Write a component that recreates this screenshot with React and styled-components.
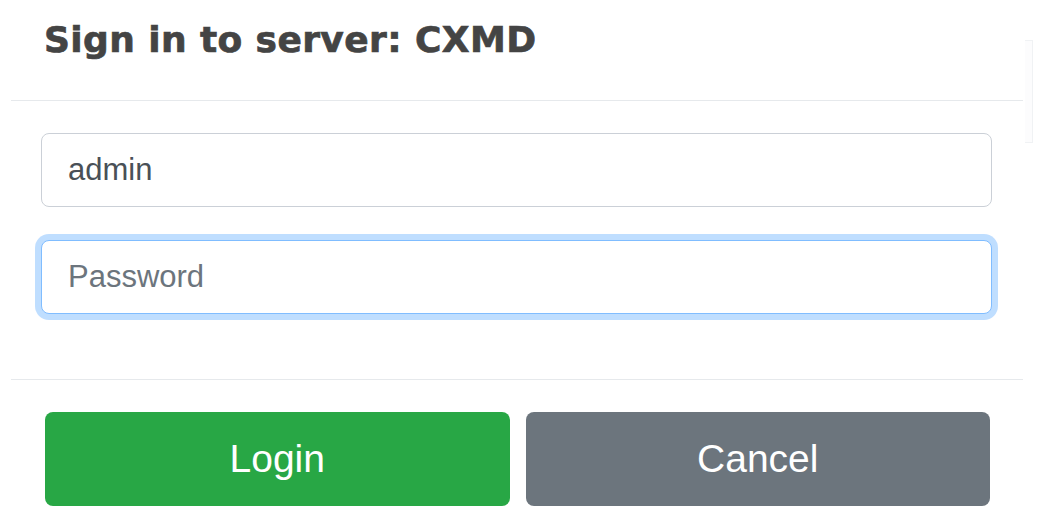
import React, { useState } from 'react';
import styled, { createGlobalStyle } from 'styled-components';

const GlobalStyle = createGlobalStyle`
    html, body {
        margin: 0;
        padding: 0;
        background: #fff;
    }
    body {
        font-family: "Liberation Sans", Arial, sans-serif;
    }
    * {
        box-sizing: border-box;
    }
`;

const Page = styled.div`
    display: flex;
    align-items: flex-start;
    width: 1041px;
    height: 529px;
    overflow: hidden;
    padding-left: 11px;
`;

const Dialog = styled.div`
    width: 1012px;
    flex-shrink: 0;
    background: #fff;
`;

const Backdrop = styled.div`
    margin-top: 40px;
    margin-left: 2px;
    width: 8px;
    height: 103px;
    background: #fcfcfd;
    border: 1px solid #f0f2f4;
    border-left: none;
`;

const Header = styled.div`
    padding: 18px 31px 39px 33px;
    border-bottom: 1px solid #e6e9ec;
`;

const Title = styled.h5`
    margin: 0;
    font-family: "DejaVu Sans", "Liberation Sans", sans-serif;
    font-weight: bold;
    font-size: 36px;
    line-height: 43px;
    letter-spacing: 0.4px;
    color: #444;
    -webkit-text-stroke: 0.7px #444;
`;

const Body = styled.div`
    padding: 32px 31px 65px 30px;
    display: flex;
    flex-direction: column;
    gap: 33px;
`;

const Field = styled.input`
    display: block;
    width: 100%;
    height: 74px;
    padding: 0 26px;
    font-family: "Liberation Sans", Arial, sans-serif;
    font-size: 31px;
    color: #495057;
    background: #fff;
    border: 1px solid ${({ focused }) => (focused ? '#80bdff' : '#cbd0d7')};
    border-radius: 8px;
    outline: none;
    box-shadow: ${({ focused }) => (focused ? '0 0 0 6px rgba(0, 123, 255, 0.25)' : 'none')};

    &::placeholder {
        color: #6c757d;
        opacity: 1;
    }
`;

const Footer = styled.div`
    border-top: 1px solid #e6e9ec;
    padding: 32px 33px 0 34px;
    display: flex;
    gap: 16px;
`;

const Button = styled.button`
    flex: 1;
    height: 94px;
    border: none;
    border-radius: 8px;
    background-color: ${({ variant }) => (variant === 'success' ? '#28a745' : '#6c757d')};
    color: #fff;
    font-family: "Liberation Sans", Arial, sans-serif;
    font-size: 39px;
    cursor: pointer;
`;

const App = () => {
    const [username, setUsername] = useState('admin');
    const [password, setPassword] = useState('');

    return (
        <>
            <GlobalStyle />
            <Page>
                <Dialog>
                    <Header>
                        <Title>Sign in to server: CXMD</Title>
                    </Header>
                    <Body>
                        <Field
                            type="text"
                            value={username}
                            onChange={(e) => setUsername(e.target.value)}
                        />
                        <Field
                            type="password"
                            placeholder="Password"
                            focused
                            value={password}
                            onChange={(e) => setPassword(e.target.value)}
                        />
                    </Body>
                    <Footer>
                        <Button variant="success">Login</Button>
                        <Button variant="secondary">Cancel</Button>
                    </Footer>
                </Dialog>
                <Backdrop />
            </Page>
        </>
    );
};

export default App;
